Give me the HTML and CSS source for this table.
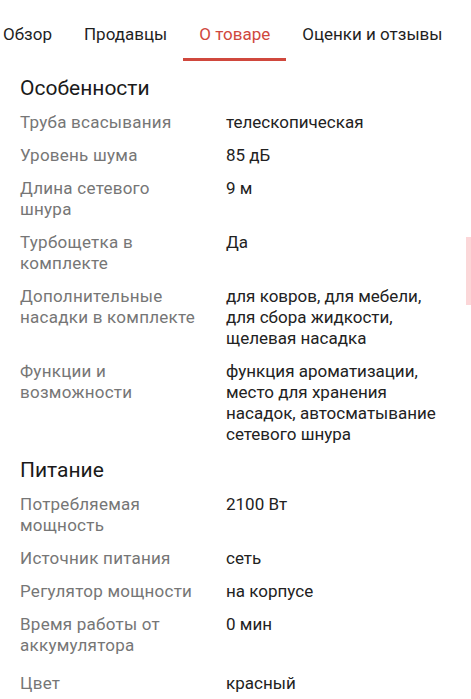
FILE: index.html
```html
<!DOCTYPE html>
<html lang="ru">
<head>
<meta charset="utf-8">
<link rel="stylesheet" href="styles.css">
</head>
<body>
<nav class="tabs">
  <div class="tab">Обзор</div>
  <div class="tab">Продавцы</div>
  <div class="tab tab--active">О товаре</div>
  <div class="tab">Оценки и отзывы</div>
</nav>
<main class="content">
  <section class="group">
    <h2 class="group__title">Особенности</h2>
    <dl class="specs">
      <dt>Труба всасывания</dt><dd>телескопическая</dd>
      <dt>Уровень шума</dt><dd>85 дБ</dd>
      <dt>Длина сетевого шнура</dt><dd>9 м</dd>
      <dt>Турбощетка в комплекте</dt><dd>Да</dd>
      <dt>Дополнительные насадки в комплекте</dt><dd>для ковров, для мебели, для сбора жидкости, щелевая насадка</dd>
      <dt>Функции и возможности</dt><dd>функция ароматизации, место для хранения насадок, автосматывание сетевого шнура</dd>
    </dl>
  </section>
  <section class="group">
    <h2 class="group__title">Питание</h2>
    <dl class="specs">
      <dt>Потребляемая мощность</dt><dd>2100 Вт</dd>
      <dt>Источник питания</dt><dd>сеть</dd>
      <dt>Регулятор мощности</dt><dd>на корпусе</dd>
      <dt>Время работы от аккумулятора</dt><dd>0 мин</dd>
      <dt class="spaced">Цвет</dt><dd class="spaced">красный</dd>
    </dl>
  </section>
</main>
<div class="scrollbar"></div>
</body>
</html>
```
FILE: styles.css
```css
* { box-sizing: border-box; }
html, body {
  margin: 0;
  padding: 0;
  background: #fff;
  font-family: Roboto, "Noto Sans", sans-serif;
  overflow: hidden;
}
body { width: 471px; height: 699px; position: relative; }

.tabs {
  display: flex;
  margin-left: -13px;
  white-space: nowrap;
}
.tab {
  padding: 24px 16px 14px;
  font-size: 17px;
  line-height: 20px;
  color: #1f1f1f;
  border-bottom: 3px solid transparent;
}
.tab--active {
  color: #d0483d;
  border-bottom-color: #d0483d;
}

.content {
  padding: 13px 20px 0 20px;
}
.group + .group { margin-top: 11px; }
.group__title {
  margin: 0 0 10px;
  font-size: 21px;
  line-height: 28px;
  font-weight: 400;
  color: #1a1a1a;
}
.specs {
  margin: 0;
  display: grid;
  grid-template-columns: 180px 1fr;
  column-gap: 26px;
  row-gap: 12px;
  font-size: 17px;
  line-height: 21px;
}
.specs dt {
  color: #767676;
  letter-spacing: 0.25px;
}
.specs dd {
  margin: 0;
  color: #222;
}
.specs .spaced { margin-top: 5px; }

.scrollbar {
  position: absolute;
  right: 0;
  top: 237px;
  width: 5px;
  height: 68px;
  background: #fcd6d8;
}
```
